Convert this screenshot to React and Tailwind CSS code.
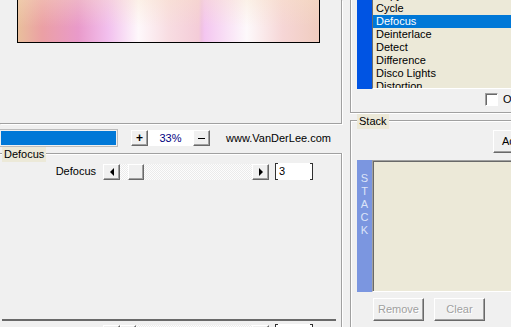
import React from 'react';

const btn =
  'bg-[#f0f0f0] border border-t-white border-l-white border-r-[#696969] border-b-[#696969] shadow-[inset_-1px_-1px_0_#a0a0a0]';

const effects = ['Copy', 'Cycle', 'Defocus', 'Deinterlace', 'Detect', 'Difference', 'Disco Lights', 'Distortion'];

function ArrowBtn({ dir }) {
  return (
    <div className={`w-[17px] h-[16px] shrink-0 flex items-center justify-center ${btn}`}>
      {dir === 'left' ? (
        <div className="w-0 h-0 border-y-[4px] border-y-transparent border-r-[4px] border-r-black" />
      ) : (
        <div className="w-0 h-0 border-y-[4px] border-y-transparent border-l-[4px] border-l-black" />
      )}
    </div>
  );
}

function SliderRow({ label, value, thumbClass }) {
  return (
    <div className="flex items-center h-[17px]">
      <div className="w-[96px] shrink-0 text-right whitespace-nowrap">{label}</div>
      <div className="ml-[7px]">
        <ArrowBtn dir="left" />
      </div>
      <div className="w-[132px] h-[16px] shrink-0 flex bg-[repeating-conic-gradient(#fdfdfd_0%_25%,#ebebeb_0%_50%)] bg-[length:2px_2px]">
        <div className={`${thumbClass} w-[16px] h-[16px] ${btn}`} />
      </div>
      <ArrowBtn dir="right" />
      <div className="ml-[6px] w-[38px] h-[17px] shrink-0 bg-white flex">
        <div className="w-[3px] h-full border-l border-y border-[#303030]" />
        <div className="flex-1 pl-[1px] leading-[17px]">{value}</div>
        <div className="w-[3px] h-full border-r border-y border-[#303030]" />
      </div>
    </div>
  );
}

function DisabledBtn({ children }) {
  return (
    <div className={`w-[51px] h-[23px] flex items-center justify-center text-[#a0a0a0] [text-shadow:1px_1px_0_#fff] ${btn}`}>
      {children}
    </div>
  );
}

export default function App() {
  return (
    <div className="w-[511px] h-[327px] overflow-hidden bg-[#f0f0f0] flex font-['Liberation_Sans',Arial,sans-serif] text-[11px] text-black leading-none">
      {/* left column */}
      <div className="w-[350px] shrink-0 flex flex-col">
        <div className="w-[342px] h-[124px] shrink-0 border-r border-b border-[#a0a0a0] shadow-[1px_1px_0_#fff]">
          <div className="ml-[17px] w-[303px] h-[43px] border-x border-b border-black bg-[linear-gradient(180deg,rgba(248,228,196,0.35),rgba(255,255,255,0)_65%),linear-gradient(90deg,#e9bf9c_0%,#eba0a4_8%,#e99aca_20%,#f2c0ee_30%,#fef8fb_40%,#f8dde2_50%,#f4ccd8_60%,#f0c2e2_61%,#f4c6f0_62%,#fdf9fb_76%,#f6d6d6_88%,#f0ccbf_100%)]" />
        </div>

        <div className="mt-[5px] flex items-start h-[18px] shrink-0">
          <div className="w-[118px] h-[18px] border border-l-0 border-[#bcbcbc] p-px">
            <div className="h-full bg-[#0078d7]" />
          </div>
          <div className={`ml-[13px] mt-px w-[17px] h-[16px] flex items-center justify-center font-bold text-[12px] ${btn}`}>+</div>
          <div className="mt-px w-[45px] h-[16px] bg-white text-[#000080] flex items-center justify-center">33%</div>
          <div className={`mt-px w-[17px] h-[16px] flex items-center justify-center ${btn}`}>
            <div className="w-[7px] h-px bg-black" />
          </div>
          <div className="ml-[16px] mt-[4px] whitespace-nowrap">www.VanDerLee.com</div>
        </div>

        <div className="relative mt-[6px] w-[342px] h-[220px] shrink-0 border-t border-r border-[#a0a0a0] shadow-[inset_0_1px_0_#fff,1px_0_0_#fff]">
          <div className="absolute left-[2px] -top-[7px] h-[15px] px-[2px] bg-[#ece9d8] leading-[15px]">Defocus</div>
          <div className="pt-[9px]">
            <SliderRow label="Defocus" value="3" thumbClass="ml-[8px]" />
          </div>
          <div className="mt-[139px] ml-[2px] w-[334px] h-[2px] bg-[#696969]" />
          <div className="mt-[3px]">
            <SliderRow label="" value="" thumbClass="ml-0" />
          </div>
        </div>
      </div>

      {/* right column */}
      <div className="flex-1 min-w-0 overflow-hidden flex flex-col">
        <div className="h-[113px] shrink-0 border-l border-b border-[#a0a0a0] shadow-[inset_1px_0_0_#fff,0_1px_0_#fff]">
          <div className="flex pl-[6px]">
            <div className="w-[15px] h-[89px] shrink-0 bg-[#0054e3]" />
            <div className="flex-1 h-[89px] overflow-hidden bg-[#ece9d8] border-l border-l-[#6d6d6d] border-b border-b-white">
              <div className="-mt-[11px]">
                {effects.map((e) => (
                  <div
                    key={e}
                    className={`h-[13px] leading-[13px] pl-[3px] whitespace-nowrap ${e === 'Defocus' ? 'bg-[#0078d7] text-white' : ''}`}
                  >
                    {e}
                  </div>
                ))}
              </div>
            </div>
          </div>
          <div className="mt-[4px] ml-[134px] flex items-center whitespace-nowrap">
            <div className="w-[13px] h-[13px] shrink-0 bg-white border border-t-[#a0a0a0] border-l-[#a0a0a0] border-r-white border-b-white shadow-[inset_1px_1px_0_#696969]" />
            <div className="ml-[5px] shrink-0">Only</div>
          </div>
        </div>

        <div className="relative mt-[7px] h-[240px] shrink-0 border-t border-l border-[#a0a0a0] shadow-[inset_1px_1px_0_#fff]">
          <div className="absolute left-[6px] -top-[7px] h-[15px] px-[2px] bg-[#ece9d8] leading-[15px]">Stack</div>
          <div className={`mt-[9px] ml-[142px] w-[75px] h-[23px] flex items-center pl-[8px] ${btn}`}>Add</div>
          <div className="mt-[7px] ml-[6px] flex">
            <div className="w-[15px] h-[132px] shrink-0 bg-[#7b96e0] flex flex-col items-center pt-[12px] text-[#dde4f8] leading-[13px]">
              {['S', 'T', 'A', 'C', 'K'].map((l) => (
                <div key={l} className="h-[13px]">{l}</div>
              ))}
            </div>
            <div className="flex-1 h-[132px] bg-[#ece9d8] border-t border-l border-[#a0a0a0] border-b border-b-white shadow-[inset_1px_1px_0_#696969]" />
          </div>
          <div className="mt-[6px] ml-[22px] flex gap-[10px]">
            <DisabledBtn>Remove</DisabledBtn>
            <DisabledBtn>Clear</DisabledBtn>
          </div>
        </div>
      </div>
    </div>
  );
}
